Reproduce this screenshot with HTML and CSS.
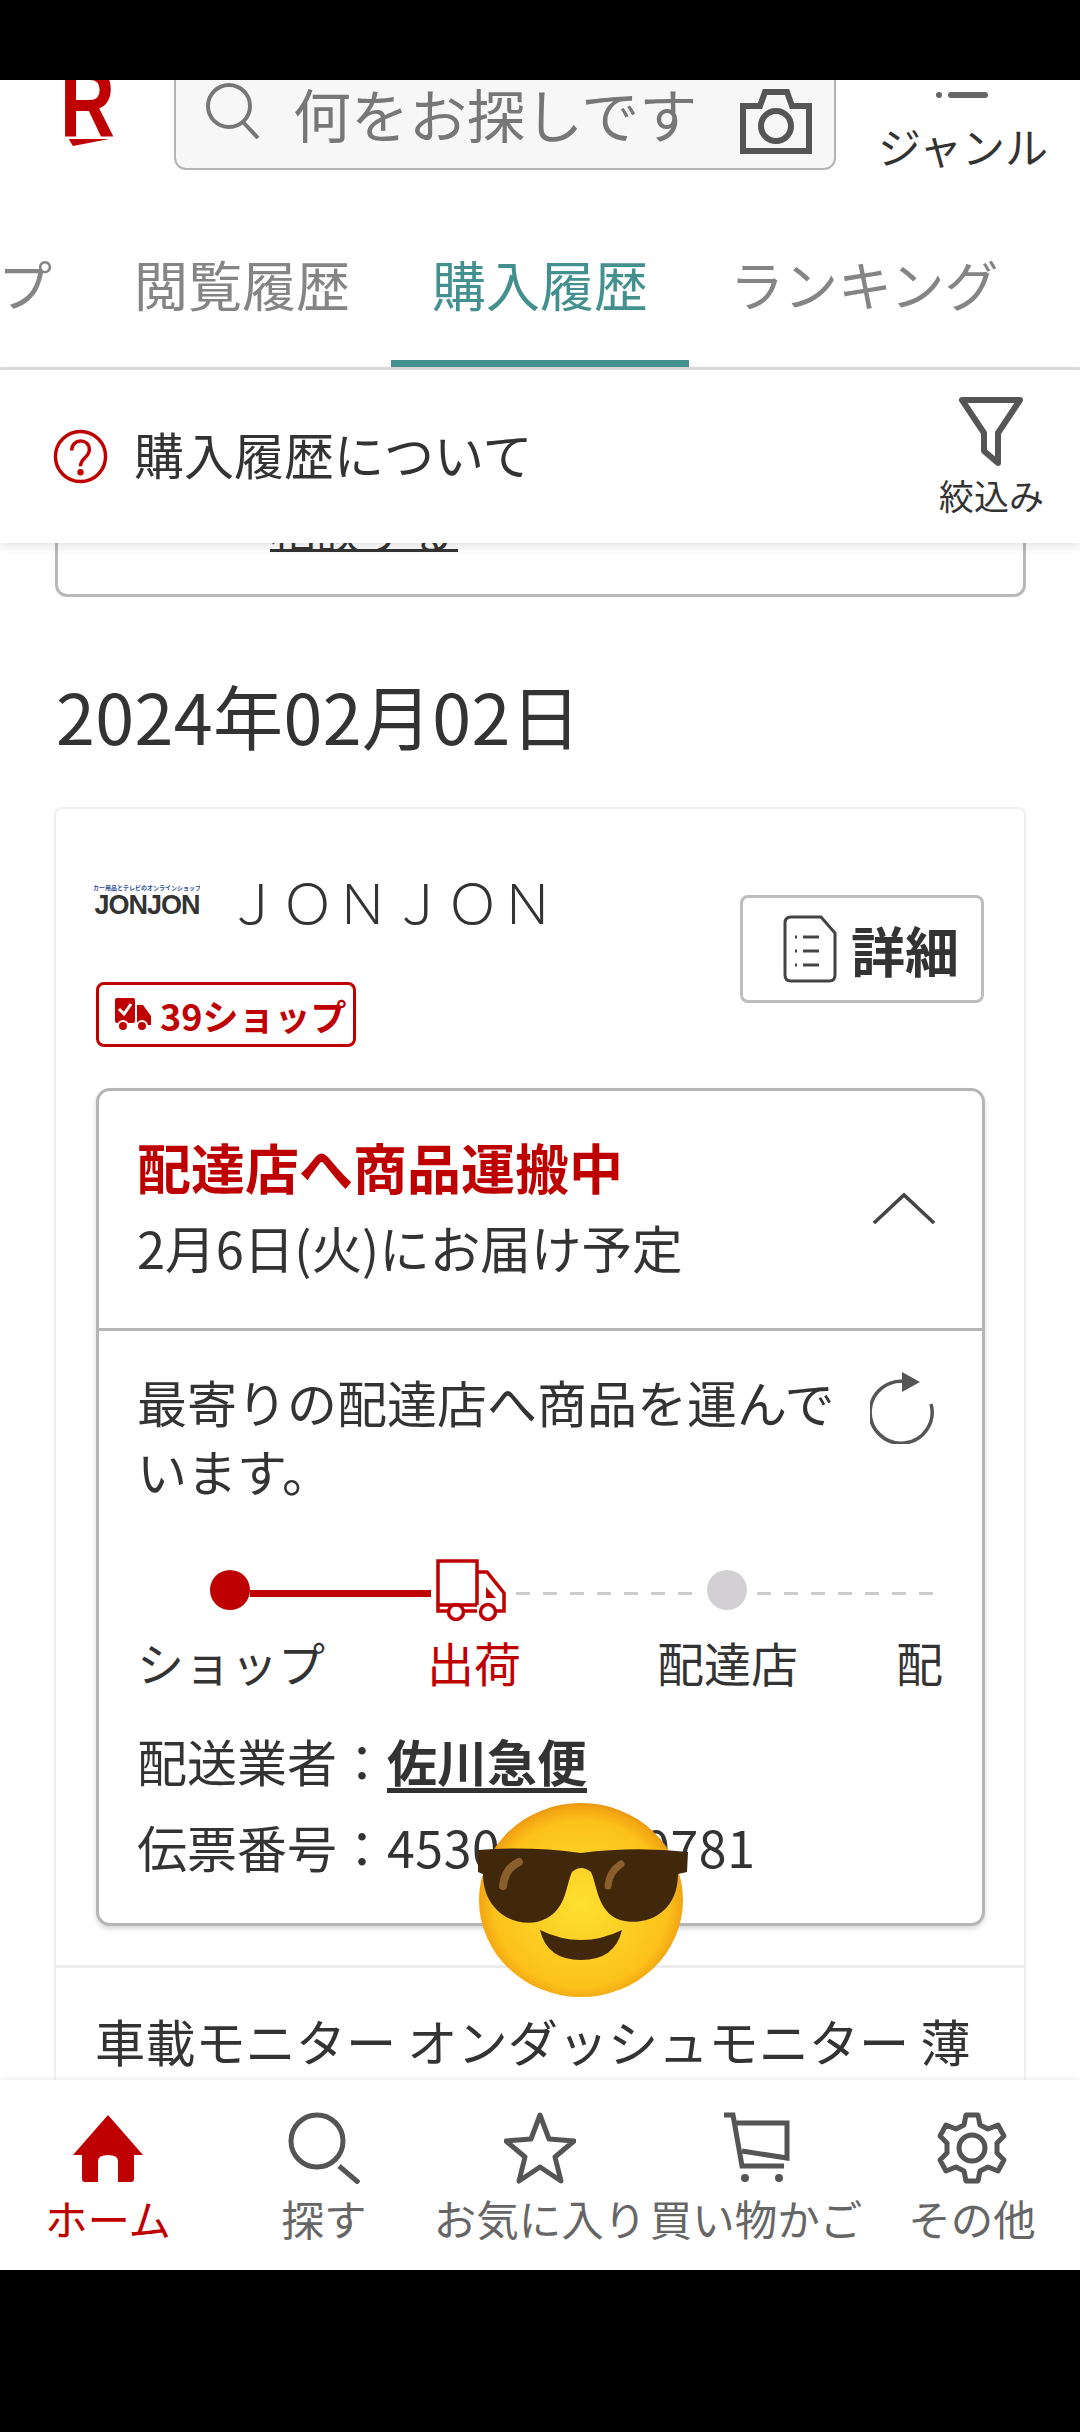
FILE: index.html
```html
<!DOCTYPE html>
<html lang="ja">
	<head>
		<meta charset="UTF-8" />
		<meta name="viewport" content="width=device-width, initial-scale=1.0" />
		<title>購入履歴</title>
		<link rel="stylesheet" href="styles.css">
	</head>

	<body>
		<div class="screen">
			<div class="black-top"></div>

			<header class="header">
				<div class="logo">
					<span class="logo-r">R</span>
					<svg class="logo-swoosh" viewBox="0 0 58 10"><polygon points="0,0 58,0 6,10" /></svg>
				</div>
				<div class="search">
					<svg class="search-icon" viewBox="0 0 56 56" fill="none" stroke="#777" stroke-width="4">
						<circle cx="25" cy="23" r="21" />
						<path d="M39 39 L54 55" />
					</svg>
					<span class="search-text">何をお探しです</span>
					<svg class="camera-icon" viewBox="0 0 72 70" fill="none" stroke="#555" stroke-width="6">
						<path d="M3 22 H20 L25 8 H47 L52 22 H69 V67 H3 Z" />
						<circle cx="36" cy="42" r="15" />
					</svg>
				</div>
				<div class="genre">
					<svg class="genre-icon" viewBox="0 0 54 30" fill="#666">
						<rect x="12" y="0" width="40" height="5" rx="2" />
						<circle cx="3" cy="20" r="3" />
						<rect x="12" y="17" width="40" height="6" rx="3" />
					</svg>
					<span>ジャンル</span>
				</div>
			</header>

			<nav class="tabs">
				<a class="tab">ショップ</a>
				<a class="tab">閲覧履歴</a>
				<a class="tab active">購入履歴</a>
				<a class="tab">ランキング</a>
				<a class="tab">お気に入り</a>
			</nav>

			<div class="filter-bar">
				<div class="about">
					<svg class="help-icon" viewBox="0 0 56 56" fill="none" stroke="#bf0000" stroke-width="3.5">
						<circle cx="28" cy="28" r="25.5" />
						<path d="M19 22 C19 9 37 9 37 21 C37 29 28 29 28 38" />
						<circle cx="28" cy="44" r="1.5" fill="#bf0000" />
					</svg>
					<span>購入履歴について</span>
				</div>
				<div class="narrow">
					<svg class="filter-icon" viewBox="0 0 64 70" fill="none" stroke="#555" stroke-width="6" stroke-linejoin="round">
						<path d="M3 3 H61 L39 36 V66 L25 54 V36 Z" />
					</svg>
					<span>絞込み</span>
				</div>
			</div>

			<main class="content">
				<div class="prev-card">
					<a class="prev-link">相談する</a>
				</div>

				<h2 class="date">2024年02月02日</h2>

				<section class="order">
					<div class="shop-head">
						<div class="shop-left">
							<div class="shop-name">
								<div class="jon-logo">
									<span class="jon-sub">カー用品とテレビのオンラインショップ</span>
									<span class="jon-main">JONJON</span>
								</div>
								<span class="shop-title">ＪＯＮＪＯＮ</span>
							</div>
							<div class="badge">
								<svg class="badge-truck" viewBox="0 0 36 34" fill="#bf0000">
									<rect x="0" y="0" width="20" height="25" rx="2" />
									<path d="M22 7 H28 L36 18 V27 H22 Z" />
									<circle cx="8" cy="28" r="5" stroke="#fff" stroke-width="2" />
									<circle cx="27" cy="28" r="5" stroke="#fff" stroke-width="2" />
									<path d="M4 11 L9 16 L16 6" fill="none" stroke="#fff" stroke-width="3" />
								</svg>
								<span>39ショップ</span>
							</div>
						</div>
						<a class="detail-btn">
							<svg class="doc-icon" viewBox="0 0 54 68" fill="none" stroke="#444" stroke-width="3">
								<path d="M8 2 H38 L52 18 V60 Q52 66 46 66 H8 Q2 66 2 60 V8 Q2 2 8 2 Z" />
								<path d="M20 22 H36 M20 36 H36 M20 50 H36" />
								<path d="M12 22 H14 M12 36 H14 M12 50 H14" />
							</svg>
							<span>詳細</span>
						</a>
					</div>

					<div class="status-box">
						<div class="status-head">
							<div>
								<p class="status-title">配達店へ商品運搬中</p>
								<p class="status-date">2月6日(火)にお届け予定</p>
							</div>
							<svg class="chevron" viewBox="0 0 64 32" fill="none" stroke="#444" stroke-width="3.5">
								<path d="M2 31 L32 3 L62 31" />
							</svg>
						</div>
						<div class="status-body">
							<div class="message">
								<p>最寄りの配達店へ商品を運んでいます。</p>
								<svg class="refresh-icon" viewBox="0 0 66 72" fill="none" stroke="#555" stroke-width="3.5">
									<path d="M38 10 A31 31 0 1 0 61 32" />
									<polygon points="32,0 50,10 32,20" fill="#555" stroke="none" />
								</svg>
							</div>
							<div class="track">
								<span class="dot done"></span>
								<span class="bar"></span>
								<svg class="truck-icon" viewBox="0 0 70 62" fill="none" stroke="#bf0000" stroke-width="3.5">
									<path d="M2 46 V2 H41 V46" />
									<path d="M41 13 H51 L68 34 V52 H60 M41 52 H28 M12 52 H2 V46 H41" />
									<circle cx="20" cy="53" r="7.5" />
									<circle cx="52" cy="53" r="7.5" />
									<polygon points="50,28 50,39 60,39" fill="#bf0000" stroke="none" />
								</svg>
								<span class="dash"></span>
								<span class="dot"></span>
								<span class="dash"></span>
							</div>
							<div class="labels">
								<span class="step-shop">ショップ</span>
								<span class="step-ship">出荷</span>
								<span class="step-store">配達店</span>
								<span>配達完了</span>
							</div>
							<p class="info">配送業者：<a class="carrier">佐川急便</a></p>
							<p class="info">伝票番号：<span class="slip">4530000000781</span></p>
						</div>
					</div>

					<p class="product">車載モニター オンダッシュモニター 薄型</p>
				</section>

				<svg class="emoji" viewBox="0 0 220 200">
					<defs>
						<radialGradient id="face" cx="50%" cy="52%" r="52%">
							<stop offset="0" stop-color="#fde030" />
							<stop offset="0.82" stop-color="#fcc21b" />
							<stop offset="0.96" stop-color="#f2a512" />
							<stop offset="1" stop-color="#eb9410" />
						</radialGradient>
					</defs>
					<ellipse cx="106" cy="98" rx="102" ry="97" fill="url(#face)" />
					<path d="M3 48 Q55 44 106 51 Q160 44 213 50 L212 70 L203 72 C203 112 170 125 145 118 C122 110 122 82 116 70 Q106 62 97 70 C90 85 92 112 62 120 C34 125 8 105 8 72 L3 70 Z" fill="#42280b" />
					<path d="M28 84 Q30 66 44 60" fill="none" stroke="#8a5f2c" stroke-width="8" stroke-linecap="round" />
					<path d="M133 84 Q134 70 146 62" fill="none" stroke="#8a5f2c" stroke-width="7" stroke-linecap="round" />
					<path d="M65 128 Q106 148 147 128 Q140 158 106 158 Q72 158 65 128 Z" fill="#42280b" />
				</svg>
			</main>

			<footer class="bottom-nav">
				<a class="nav-item current">
					<svg viewBox="0 0 72 70" fill="#bf0000">
						<path d="M36 2 L71 42 H62 V66 Q62 69 59 69 H46 V48 Q46 42 36 42 Q26 42 26 48 V69 H13 Q10 69 10 66 V42 H1 Z" />
					</svg>
					<span>ホーム</span>
				</a>
				<a class="nav-item">
					<svg viewBox="0 0 72 72" fill="none" stroke="#555" stroke-width="5">
						<circle cx="29" cy="29" r="26" />
						<path d="M51 54 L71 71" />
					</svg>
					<span>探す</span>
				</a>
				<a class="nav-item">
					<svg viewBox="0 0 72 72" fill="none" stroke="#555" stroke-width="5" stroke-linejoin="round">
						<path d="M36 3 L45 27 L70 29 L51 45 L57 69 L36 55 L15 69 L21 45 L2 29 L27 27 Z" />
					</svg>
					<span>お気に入り</span>
				</a>
				<a class="nav-item">
					<svg viewBox="0 0 72 72" fill="none" stroke="#555" stroke-width="5">
						<path d="M4 3 H13 L22 54 H64 M15 11 H67 V46 L22 39" />
						<circle cx="25" cy="66" r="4" fill="#555" stroke="none" />
						<circle cx="59" cy="66" r="4" fill="#555" stroke="none" />
					</svg>
					<span>買い物かご</span>
				</a>
				<a class="nav-item">
					<svg viewBox="0 0 72 72" fill="none" stroke="#555" stroke-width="5" stroke-linejoin="round">
						<path d="M30 3 H42 L44 13 L52 17 L62 13 L68 24 L61 31 V41 L68 48 L62 59 L52 55 L44 59 L42 69 H30 L28 59 L20 55 L10 59 L4 48 L11 41 V31 L4 24 L10 13 L20 17 L28 13 Z" />
						<circle cx="36" cy="36" r="13" />
					</svg>
					<span>その他</span>
				</a>
			</footer>

			<div class="black-bottom"></div>
		</div>
	</body>
</html>
```

FILE: styles.css
```css
* {
	box-sizing: border-box;
}
html,
body {
	margin: 0;
	padding: 0;
}
body {
	font-family: 'Noto Sans CJK JP', 'Noto Sans', sans-serif;
	color: #333;
	background: #fff;
}
p,
h2 {
	margin: 0;
	font-weight: normal;
}
.screen {
	width: 1080px;
	height: 2432px;
	display: flex;
	flex-direction: column;
	overflow: hidden;
}
.black-top {
	height: 80px;
	background: #000;
	flex: none;
	position: relative;
	z-index: 5;
}
.black-bottom {
	height: 162px;
	background: #000;
	flex: none;
}

/* header, scrolled partly under the black bar */
.header {
	height: 90px;
	flex: none;
	display: flex;
	align-items: flex-end;
	overflow: hidden;
	padding-left: 60px;
}
.logo {
	width: 114px;
	height: 90px;
	flex: none;
	overflow: hidden;
	display: flex;
	flex-direction: column;
	justify-content: flex-end;
	padding-bottom: 24px;
}
.logo-r {
	font-family: 'Liberation Sans', sans-serif;
	font-weight: bold;
	font-size: 76px;
	line-height: 55px;
	color: #bf0000;
	transform: scaleY(1.3);
	transform-origin: 0 82%;
}
.logo-swoosh {
	width: 58px;
	height: 10px;
	fill: #bf0000;
	margin-top: 4px;
}
.search {
	width: 662px;
	height: 110px;
	flex: none;
	margin-top: -20px;
	display: flex;
	align-items: center;
	background: #f7f7f7;
	border: 2px solid #b5b5b5;
	border-radius: 12px;
	padding: 0 22px 0 28px;
}
.search-icon {
	width: 56px;
	height: 56px;
	flex: none;
	margin-top: -8px;
}
.search-text {
	font-size: 58px;
	line-height: 1;
	color: #777;
	margin-left: 33px;
	flex: 1;
	white-space: nowrap;
	margin-top: -4px;
}
.camera-icon {
	width: 72px;
	height: 70px;
	flex: none;
	margin-top: 8px;
}
.genre {
	width: 244px;
	flex: none;
	display: flex;
	flex-direction: column;
	align-items: center;
	font-size: 43px;
	line-height: 50px;
	white-space: nowrap;
	padding-left: 10px;
}
.genre-icon {
	width: 54px;
	height: 30px;
	margin-top: -12px;
	margin-bottom: 15px;
}

.tabs {
	height: 200px;
	flex: none;
	display: flex;
	border-bottom: 3px solid #ddd;
	margin-left: -205px;
	width: 1500px;
}
.tab {
	flex: none;
	display: flex;
	align-items: center;
	padding: 36px 41px 0;
	font-size: 54px;
	color: #858585;
	white-space: nowrap;
	border-bottom: 7px solid transparent;
}
.tab.active {
	color: #43908f;
	border-bottom-color: #43908f;
}

.filter-bar {
	height: 173px;
	flex: none;
	display: flex;
	align-items: center;
	justify-content: space-between;
	background: #fff;
	padding: 0 36px 0 53px;
	position: relative;
	z-index: 2;
	box-shadow: 0 3px 10px rgba(0, 0, 0, 0.12);
}
.about {
	display: flex;
	align-items: center;
	gap: 26px;
	font-size: 50px;
	white-space: nowrap;
}
.about span {
	margin-top: -8px;
}
.help-icon {
	width: 55px;
	height: 55px;
	flex: none;
}
.narrow {
	display: flex;
	flex-direction: column;
	align-items: center;
	font-size: 35px;
	line-height: 44px;
	white-space: nowrap;
}
.filter-icon {
	width: 64px;
	height: 70px;
	margin-bottom: 6px;
}

.content {
	flex: 1;
	min-height: 0;
	overflow: hidden;
	position: relative;
}
.prev-card {
	height: 154px;
	margin: -100px 54px 0 55px;
	border: 3px solid #b8b8b8;
	border-top: none;
	border-radius: 0 0 12px 12px;
	padding-left: 212px;
}
.prev-link {
	display: inline-block;
	width: 188px;
	height: 109px;
	font-size: 46px;
	line-height: 172px;
	color: #333;
	border-bottom: 3px solid #333;
	white-space: nowrap;
	overflow: hidden;
}
.date {
	font-size: 70px;
	line-height: 100px;
	letter-spacing: 0.4px;
	color: #333;
	margin: 68px 0 0 56px;
}
.order {
	margin: 42px 54px 0;
	background: #fff;
	border: 2px solid #f0f0f0;
	border-radius: 8px;
	padding: 0 40px;
	height: 1400px;
	box-shadow: 0 0 4px rgba(0, 0, 0, 0.03);
}
.shop-head {
	display: flex;
	justify-content: space-between;
	padding-top: 64px;
}
.shop-name {
	display: flex;
	align-items: center;
	gap: 25px;
	height: 64px;
	margin: -5px 0 0 -2px;
}
.jon-logo {
	width: 106px;
	display: flex;
	flex-direction: column;
	align-items: center;
	overflow: hidden;
	margin-top: 2px;
}
.jon-sub {
	font-size: 6px;
	line-height: 8px;
	color: #2d4f96;
	white-space: nowrap;
	font-weight: bold;
}
.jon-main {
	font-family: 'Liberation Sans', sans-serif;
	font-weight: bold;
	font-size: 27px;
	line-height: 26px;
	letter-spacing: -1px;
	color: #333;
}
.shop-title {
	font-size: 55px;
	font-weight: 300;
	white-space: nowrap;
	line-height: 64px;
}
.badge {
	display: inline-flex;
	align-items: center;
	gap: 9px;
	height: 65px;
	width: 260px;
	margin-top: 50px;
	padding: 0 12px 0 16px;
	border: 3px solid #bf0000;
	border-radius: 8px;
	color: #bf0000;
	font-size: 36px;
	font-weight: bold;
	white-space: nowrap;
}
.badge-truck {
	width: 36px;
	height: 34px;
	flex: none;
}
.detail-btn {
	display: flex;
	align-items: center;
	gap: 14px;
	width: 244px;
	height: 108px;
	margin-top: 22px;
	padding-left: 40px;
	border: 3px solid #bdbdbd;
	border-radius: 8px;
	font-size: 54px;
	font-weight: bold;
	color: #333;
}
.doc-icon {
	width: 54px;
	height: 68px;
	flex: none;
}

.status-box {
	margin-top: 41px;
	width: 889px;
	height: 838px;
	border: 3px solid #b5b5b5;
	border-radius: 14px;
	box-shadow: 0 3px 5px rgba(0, 0, 0, 0.15);
	background: #fff;
}
.status-head {
	height: 240px;
	display: flex;
	align-items: center;
	justify-content: space-between;
	padding: 0 46px 6px 38px;
	border-bottom: 3px solid #b5b5b5;
}
.status-title {
	font-size: 54px;
	font-weight: bold;
	line-height: 80px;
	color: #bf0000;
}
.status-date {
	font-size: 50.6px;
	line-height: 80px;
}
.chevron {
	width: 64px;
	height: 32px;
	flex: none;
	margin-top: 2px;
}
.status-body {
	padding: 36px 38px 0;
}
.message {
	display: flex;
	justify-content: space-between;
	font-size: 50px;
	line-height: 69px;
}
.message p {
	width: 702px;
}
.refresh-icon {
	width: 66px;
	height: 72px;
	flex: none;
	margin: 5px 8px 0 0;
}
.track {
	display: flex;
	align-items: center;
	margin: 53px 0 0 73px;
	width: 728px;
	height: 64px;
}
.dot {
	width: 40px;
	height: 40px;
	border-radius: 50%;
	background: #d2d0d3;
	flex: none;
}
.dot.done {
	background: #bf0000;
}
.bar {
	flex: 1;
	height: 7px;
	background: #bf0000;
	margin-top: 6px;
}
.truck-icon {
	width: 70px;
	height: 62px;
	flex: none;
	margin: 0 10px 0 5px;
}
.dash {
	flex: 1;
	height: 3px;
	background: repeating-linear-gradient(to right, #ccc 0, #ccc 14px, transparent 14px, transparent 27px);
	margin: 6px 10px 0 0;
}
.dash:last-child {
	margin-right: 0;
	margin-left: 10px;
}
.labels {
	display: flex;
	font-size: 47px;
	line-height: 66px;
	margin-top: 7px;
	width: 806px;
	overflow: hidden;
	white-space: nowrap;
}
.labels span {
	flex: none;
}
.labels .step-shop {
	width: 290px;
}
.labels .step-ship {
	width: 230px;
	color: #bf0000;
}
.labels .step-store {
	width: 239px;
}
.info {
	font-size: 50px;
	line-height: 86px;
	white-space: nowrap;
}
.labels + .info {
	margin-top: 22px;
}
.carrier {
	font-weight: bold;
	color: #333;
	text-decoration: underline;
	text-underline-offset: 6px;
}
.slip {
	letter-spacing: 0.6px;
}
.product {
	margin: 39px -40px 0;
	padding: 32px 40px 0 39px;
	border-top: 3px solid #ececec;
	font-size: 50.2px;
	line-height: 80px;
	overflow: hidden;
}
.emoji {
	position: absolute;
	left: 475px;
	top: 1259px;
	width: 220px;
	height: 200px;
}

.bottom-nav {
	height: 190px;
	flex: none;
	display: grid;
	grid-template-columns: repeat(5, 216px);
	background: #fff;
	position: relative;
	z-index: 2;
	box-shadow: 0 -2px 6px rgba(0, 0, 0, 0.06);
	padding-top: 32px;
}
.nav-item {
	display: flex;
	flex-direction: column;
	align-items: center;
	font-size: 42.5px;
	line-height: 54px;
	color: #666;
	white-space: nowrap;
}
.nav-item svg {
	width: 72px;
	height: 72px;
	margin-bottom: 7px;
}
.nav-item.current {
	color: #bf0000;
}
```
